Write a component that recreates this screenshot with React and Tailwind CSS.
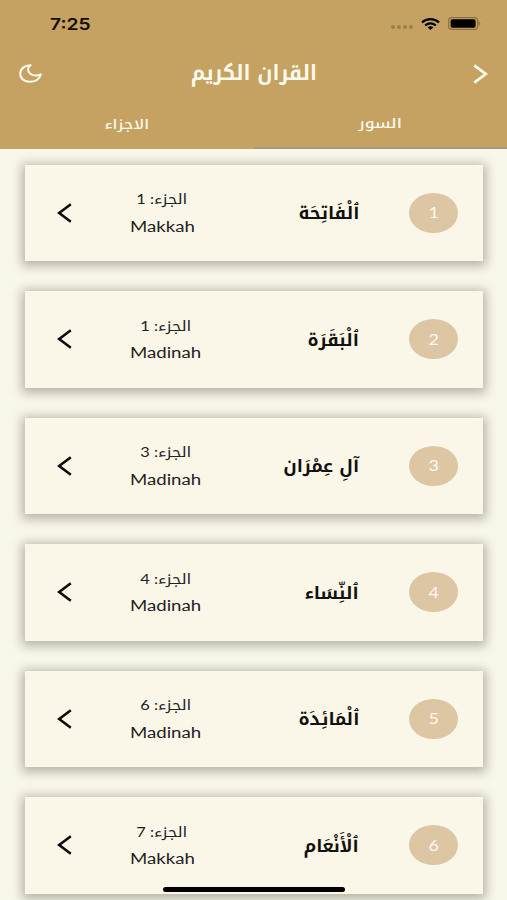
const surahs = [
  { id: 1, name: "ٱلْفَاتِحَة", juz: 1, place: "Makkah" },
  { id: 2, name: "ٱلْبَقَرَة", juz: 1, place: "Madinah" },
  { id: 3, name: "آلِ عِمْرَان", juz: 3, place: "Madinah" },
  { id: 4, name: "ٱلنِّسَاء", juz: 4, place: "Madinah" },
  { id: 5, name: "ٱلْمَائِدَة", juz: 6, place: "Madinah" },
  { id: 6, name: "ٱلْأَنْعَام", juz: 7, place: "Makkah" },
];

function StatusBar() {
  return (
    <div className="flex h-[47px] items-center justify-between pl-[50px] pr-[25px]">
      <span className="origin-left scale-x-[1.2] font-['Inter',sans-serif] text-[16px] font-semibold leading-none text-[#120c02]">
        7:25
      </span>
      <div className="flex items-center">
        <div className="mr-[8px] mt-[7px] flex gap-[2px]">
          <i className="size-[4px] rounded-full bg-[#9b7f4c]" />
          <i className="size-[4px] rounded-full bg-[#9b7f4c]" />
          <i className="size-[4px] rounded-full bg-[#9b7f4c]" />
          <i className="size-[4px] rounded-full bg-[#9b7f4c]" />
        </div>
        <svg className="mr-[8px] h-[12px] w-[19px]" viewBox="0 0 19 12" preserveAspectRatio="none">
          <path d="M1 4.5C5.8.1 13.2.1 18 4.5" fill="none" stroke="#000" strokeWidth="2.3" />
          <path d="M4.2 7.5c3-2.8 7.6-2.8 10.6 0" fill="none" stroke="#000" strokeWidth="2.1" />
          <path d="M6.6 9.3c1.7-1.5 4.1-1.5 5.8 0L9.5 12z" fill="#000" />
        </svg>
        <svg className="h-[13px] w-[34px]" viewBox="0 0 34 13">
          <rect x=".6" y=".6" width="29" height="11.8" rx="3.2" fill="none" stroke="#8b7145" strokeWidth="1.2" />
          <rect x="2.6" y="2.2" width="25" height="8.6" rx="1.8" fill="#000" />
          <path d="M30.5 4.5c2.4.8 2.4 3.2 0 4z" fill="#9a6c30" />
        </svg>
      </div>
    </div>
  );
}

function Header() {
  return (
    <header className="flex h-[149px] flex-col bg-[#c5a262] text-[#fdf9ec]">
      <StatusBar />
      <div className="flex h-[53px] items-center justify-between pl-[19px] pr-[19px]">
        <svg className="h-[19px] w-[23px]" viewBox="0 0 23 19" fill="none" stroke="currentColor" strokeWidth="2.1" strokeLinejoin="round">
          <path d="M11.6 1.2C5.6 1.1 1.2 4.9 1.2 9.8c0 4.7 4.3 8 9.8 8 5.2 0 9.6-2.8 10.8-7.4-1.5.8-3.1 1.1-4.9 1.1-4.6 0-7.9-2.6-7.9-6.2 0-1.6.8-3 2.6-4.1z" />
        </svg>
        <h1 dir="rtl" className="mr-[8px] origin-center scale-x-[0.96] whitespace-nowrap font-['Noto_Kufi_Arabic','Noto_Sans_Arabic',sans-serif] text-[20.8px] font-bold leading-none">
          القران الكريم
        </h1>
        <svg className="h-[20px] w-[15px]" viewBox="0 0 15 20" fill="none" stroke="currentColor" strokeWidth="2.8">
          <path d="M1.2 1.3 12.8 10 1.2 18.7" />
        </svg>
      </div>
      <nav dir="rtl" className="grid flex-1 grid-cols-2 font-['Noto_Kufi_Arabic','Noto_Sans_Arabic',sans-serif] text-[13.5px] font-medium leading-none">
        <div className="flex items-center justify-center border-b-2 border-[#a39a7f] pt-px">
          <span className="scale-x-[1.26]">السور</span>
        </div>
        <div className="flex items-center justify-center">
          <span className="scale-x-[1.18]">الاجزاء</span>
        </div>
      </nav>
    </header>
  );
}

function SurahCard({ surah }) {
  return (
    <div className="flex h-[96.5px] shrink-0 items-center bg-[#faf7e9] pl-[32px] pr-[25px] shadow-[0_2px_10px_3px_rgba(60,62,50,0.36)]">
      <svg className="h-[20px] w-[15px]" viewBox="0 0 15 20" fill="none" stroke="#0c0c0a" strokeWidth="2.6">
        <path d="M13.8 1.3 2.2 10l11.6 8.7" />
      </svg>
      <div className="ml-[58px] flex flex-col items-center text-[#22211e]">
        <div dir="rtl" className="flex h-[28px] origin-center scale-x-[1.17] items-center whitespace-nowrap font-['Lato','Noto_Kufi_Arabic',sans-serif] text-[14px]">
          الجزء: {surah.juz}
        </div>
        <div className={surah.place === "Makkah" ? "h-[28px] w-[64px]" : "h-[28px] w-[72px]"}>
          <span className="inline-block origin-left scale-x-[1.2] font-['Lato',sans-serif] text-[15.5px] leading-[26px]">
            {surah.place}
          </span>
        </div>
      </div>
      <div dir="rtl" className="ml-auto mr-[50px] flex h-[30px] origin-right scale-x-[1.01] items-center whitespace-nowrap pt-px font-['Noto_Kufi_Arabic','Noto_Sans_Arabic',sans-serif] text-[17.6px] font-bold text-[#12110f]">
        {surah.name}
      </div>
      <div className="flex h-[40px] w-[49px] items-center justify-center rounded-[50%] bg-[#dcc6a3] font-['Lato',sans-serif] text-[16px] text-[#fffaf0]">
        <span className="-mt-px scale-x-[1.12]">{surah.id}</span>
      </div>
    </div>
  );
}

export default function App() {
  return (
    <div className="relative flex h-[900px] w-[507px] flex-col overflow-hidden bg-[#f9f7e9]">
      <Header />
      <main className="flex min-h-0 flex-1 flex-col gap-[30px] overflow-hidden pl-[25px] pr-[24px] pt-[15.5px]">
        {surahs.map((surah) => (
          <SurahCard key={surah.id} surah={surah} />
        ))}
      </main>
      <div className="absolute bottom-[8px] left-[163px] h-[5px] w-[182px] rounded-full bg-black" />
    </div>
  );
}
